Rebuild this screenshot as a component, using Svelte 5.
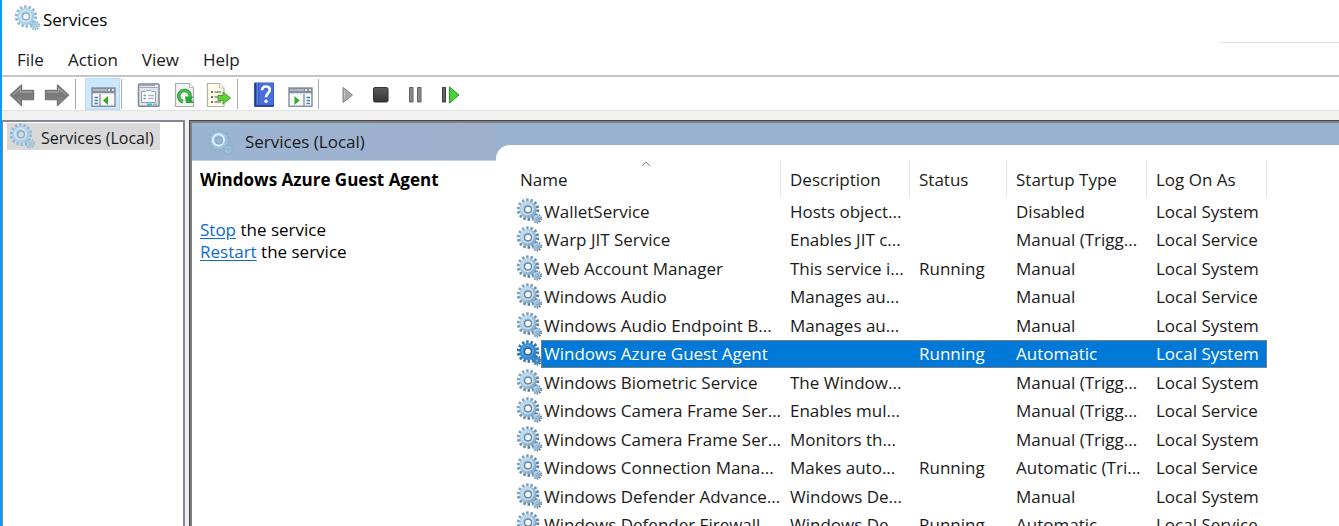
<script>
  const menus = ['File', 'Action', 'View', 'Help'];
  const toolbar = [
    ['back', 'forward'],
    ['tree'],
    ['properties', 'refresh', 'export'],
    ['help', 'actions'],
    ['start', 'stop', 'pause', 'restart']
  ];
  const labels = {
    back: 'Back', forward: 'Forward', tree: 'Show/Hide Console Tree',
    properties: 'Properties', refresh: 'Refresh', export: 'Export List',
    help: 'Help', actions: 'Show/Hide Action Pane', start: 'Start Service',
    stop: 'Stop Service', pause: 'Pause Service', restart: 'Restart Service'
  };
  const columns = ['Name', 'Description', 'Status', 'Startup Type', 'Log On As'];
  const services = [
    ['WalletService', 'Hosts object...', '', 'Disabled', 'Local System'],
    ['Warp JIT Service', 'Enables JIT c...', '', 'Manual (Trigg...', 'Local Service'],
    ['Web Account Manager', 'This service i...', 'Running', 'Manual', 'Local System'],
    ['Windows Audio', 'Manages au...', '', 'Manual', 'Local Service'],
    ['Windows Audio Endpoint B...', 'Manages au...', '', 'Manual', 'Local System'],
    ['Windows Azure Guest Agent', '', 'Running', 'Automatic', 'Local System'],
    ['Windows Biometric Service', 'The Window...', '', 'Manual (Trigg...', 'Local System'],
    ['Windows Camera Frame Ser...', 'Enables mul...', '', 'Manual (Trigg...', 'Local Service'],
    ['Windows Camera Frame Ser...', 'Monitors th...', '', 'Manual (Trigg...', 'Local System'],
    ['Windows Connection Mana...', 'Makes auto...', 'Running', 'Automatic (Tri...', 'Local Service'],
    ['Windows Defender Advance...', 'Windows De...', '', 'Manual', 'Local System'],
    ['Windows Defender Firewall', 'Windows De...', 'Running', 'Automatic', 'Local Service']
  ];
  let selected = $state(5);
</script>

{#snippet gear(kind)}
  <svg class="gear {kind}" viewBox="0 0 26 26" aria-hidden="true">
    <circle class="teeth" cx="12" cy="11.5" r="9.6" stroke-width="3.2" stroke-dasharray="2.5 1.81" />
    <circle class="rim" cx="12" cy="11.5" r="6" stroke-width="5.2" />
    <circle class="shine" cx="11.4" cy="10.8" r="5.6" stroke-width="2" />
    <circle class="edge" cx="12" cy="11.5" r="3.4" stroke-width="1.3" />
    <circle class="teeth" cx="21" cy="20.5" r="4" stroke-width="2" stroke-dasharray="1.5 1.013" />
    <circle class="rim" cx="21" cy="20.5" r="2.3" stroke-width="2.2" />
    <circle class="edge" cx="21" cy="20.5" r="1" stroke-width=".8" />
  </svg>
{/snippet}

{#snippet icon(name)}
  <svg class="tool" viewBox="0 0 26 26" aria-hidden="true">
    {#if name === 'back' || name === 'forward'}
      <g transform={name === 'forward' ? 'translate(26 0) scale(-1 1)' : ''}>
        <path d="M1.5 14 12.5 4v5.5h12v9h-12v6z" fill="url(#metal)" stroke="#777" stroke-width="1.4" stroke-linejoin="round" />
        <path d="M4 14 11.3 7.3V11h12" fill="none" stroke="#aaa" />
      </g>
    {:else if name === 'tree' || name === 'actions'}
      <rect x="2" y="7" width="23" height="18.3" fill="#f7f8fa" stroke="#858b97" stroke-width="1.4" />
      <path d="M2 7h23v6H2z" fill="#878e9b" />
      <path d="M3 9h14M3 12.5h21" stroke="#d9dde3" />
      <path d="M18 9h2m2 0h2" stroke="#fff" stroke-width="1.5" />
      {#if name === 'tree'}
        <path d="M10 13v12" stroke="#858b97" stroke-width="1.3" />
        <path d="M4.5 16.5H8m-3.5 3H8m-3.5 3H8" stroke="#3f7fc4" stroke-width="1.5" />
        <path d="m13 19.5 5-4.5v9z" fill="#2eae20" />
      {:else}
        <path d="M17 13v12" stroke="#858b97" stroke-width="1.3" />
        <path d="M19.5 16.5H23m-3.5 3H23m-3.5 3H23" stroke="#3f7fc4" stroke-width="1.5" />
        <path d="m12.5 19.5-5-4.5v9z" fill="#2eae20" />
      {/if}
    {:else if name === 'properties'}
      <rect x="2.5" y="3" width="20.5" height="22.3" rx="1" fill="#e1e5ea" stroke="#7f8895" stroke-width="1.5" />
      <path d="M3 4.5h20M3 6.5h20" stroke="#a3aab4" />
      <path d="M19 5h3" stroke="#eef5ff" stroke-width="2" />
      <path d="M5.500 10.500h4l1-1h4l1 1h4v11h-14z" fill="#fff" stroke="#8ca0ba" />
      <path d="M7.500 14.500H10m-2.500 3H10" stroke="#7793b5" stroke-width="1.4" />
      <path d="M12 14.500h6m-6 3h6" stroke="#aab5c5" stroke-width="1.4" />
      <path d="M11 23.500h5" stroke="#29bde9" stroke-width="2" /><path d="M17 23.500h4" stroke="#a8b2be" stroke-width="2" />
    {:else if name === 'refresh'}
      <path d="M4.500 2.500h14l4 4v19h-18z" fill="#f3f3f4" stroke="#a9adb3" stroke-width="1.2" />
      <path d="M18.500 2.500v4h4" fill="#fff" stroke="#b9bdc3" />
      <path d="M12 20.700A5.700 5.700 0 1 1 19.100 16" fill="none" stroke="#249d2b" stroke-width="3.6" />
      <path d="M12 20.500A5.700 5.700 0 1 1 19.100 16" fill="none" stroke="#4dc052" stroke-width="1.7" />
      <path d="M14 15.500h8.500l-2 2.500 2 4h-7.500z" fill="#2aa536" />
    {:else if name === 'export'}
      <path d="M1.500 2.500h12l4.500 4.500v18.500H1.500z" fill="#fffce9" stroke="#b4b09c" stroke-width="1.2" />
      <path d="M13.500 2.500V7H18" fill="#fff" stroke="#c2bead" />
      <path d="M5 11h2m-2 5h2m-2 5h2" stroke="#444" stroke-width="1.7" />
      <path d="M8.500 11H15m-6.500 5H13m-4.500 5H15" stroke="#8b8475" stroke-width="1.5" />
      <path d="M12 14.500h5v-3.500l7.500 6-7.500 6v-3.500h-5z" fill="#67cf3a" stroke="#3fa62e" />
    {:else if name === 'help'}
      <path d="M2.500 1.500h19.500v24H2.500z" fill="#2850b4" />
      <path d="M6.500 2h15v22h-15z" fill="#476edb" />
      <path d="M3 2v23h18.500" fill="none" stroke="#183a8d" stroke-width="1.5" />
      <path d="M5.200 2v22" stroke="#7597e5" />
      <path d="M10 9.200q.2-3.700 4-3.700t3.800 3.300c0 3.400-3.800 3.600-3.800 7.500" fill="none" stroke="#fff" stroke-width="2.6" />
      <circle cx="14" cy="20.300" r="1.700" fill="#fff" />
    {:else if name === 'start'}
      <path d="M10 6.500v15L19.500 14z" fill="#aaa" stroke="#858585" stroke-linejoin="round" />
      <path d="M11.500 9v9" stroke="#c9c9c9" />
    {:else if name === 'stop'}
      <rect x="5.500" y="6.500" width="14.500" height="14.500" rx="1.500" fill="url(#coal)" stroke="#333" />
    {:else if name === 'pause'}
      <path d="M6.500 6.500h3.500v14.500h-3.500zM14.500 6.500h3.500v14.500h-3.500z" fill="#8b8b8b" stroke="#626262" />
    {:else}
      <path d="M4.500 6.500h3v14.500h-3z" fill="#666" stroke="#393939" />
      <path d="M11.500 6v16l9.500-8z" fill="#47d43b" stroke="#269820" stroke-linejoin="round" />
    {/if}
  </svg>
{/snippet}

<div class="window">
  <svg class="defs" aria-hidden="true">
    <linearGradient id="metal" x2="0" y2="1"><stop stop-color="#929292" /><stop offset=".5" stop-color="#777" /><stop offset="1" stop-color="#969696" /></linearGradient>
    <linearGradient id="coal" x2="0" y2="1"><stop stop-color="#5b5b5b" /><stop offset="1" stop-color="#363636" /></linearGradient>
    <linearGradient id="steel" x2="1" y2="1"><stop stop-color="#86abc9" /><stop offset=".5" stop-color="#6f93b0" /><stop offset="1" stop-color="#4c6b86" /></linearGradient>
    <linearGradient id="rim" x2="1" y2="1"><stop stop-color="#b5d6ee" /><stop offset="1" stop-color="#7fa9cb" /></linearGradient>
  </svg>
  <header class="title">{@render gear('pale')}<span>Services</span></header>
  <nav class="menu">
    {#each menus as m}<button>{m}</button>{/each}
  </nav>
  <div class="toolbar">
    {#each toolbar as group}
      <div class="group">
        {#each group as name}
          <button class:active={name === 'tree'} aria-label={labels[name]}>{@render icon(name)}</button>
        {/each}
      </div>
    {/each}
  </div>

  <main>
    <aside class="tree">
      <button class="node">{@render gear('pale')}<span>Services (Local)</span></button>
    </aside>
    <section class="panel">
      <div class="detail">
        <div class="banner">{@render gear('faint')}<span>Services (Local)</span></div>
        <div class="info">
          <h1>Windows Azure Guest Agent</h1>
          <p><a href="#stop">Stop</a> the service</p>
          <p><a href="#restart">Restart</a> the service</p>
        </div>
      </div>
      <div class="list">
        <table>
          <colgroup><col class="c1" /><col class="c2" /><col class="c3" /><col class="c4" /><col class="c5" /></colgroup>
          <thead>
            <tr>
              {#each columns as c, i}
                <th>{c}{#if i === 0}<svg class="sort" viewBox="0 0 10 6" aria-hidden="true"><path d="m1 5 4-4 4 4" fill="none" stroke="#888" /></svg>{/if}</th>
              {/each}
            </tr>
          </thead>
          <tbody>
            {#each services as row, i}
              <tr class:selected={i === selected} onclick={() => (selected = i)}>
                <td class="name"><div>{@render gear(i === selected ? 'strong' : 'normal')}<span>{row[0]}</span></div></td>
                {#each row.slice(1) as cell}<td>{cell}</td>{/each}
              </tr>
            {/each}
          </tbody>
        </table>
      </div>
    </section>
  </main>
</div>

<style>
  :global(body) { margin: 0; overflow: hidden; }
  .window {
    box-sizing: border-box;
    height: 100vh;
    display: flex;
    flex-direction: column;
    border-left: 2px solid #0c9bf3;
    background: #fff;
    color: #1a1a1a;
    font-family: "Open Sans", "Noto Sans", sans-serif;
    font-size: 17px;
    line-height: 22px;
    white-space: nowrap;
  }
  .defs { position: absolute; width: 0; height: 0; }
  button { font: inherit; color: inherit; background: none; border: 0; padding: 0; margin: 0; }
  .gear { width: 26px; height: 26px; flex: none; fill: none; }
  .gear .teeth { stroke: url(#steel); }
  .gear .rim { stroke: url(#rim); }
  .gear .shine { stroke: #c2dcf0; }
  .gear .edge { stroke: #64839f; }
  .pale .teeth { stroke: #92b8d3; }
  .pale .rim { stroke: #a9cfe7; }
  .pale .shine { stroke: #cbe5f4; }
  .pale .edge { stroke: #8baac0; }
  .faint .teeth { stroke: #8eafc9; }
  .faint .rim { stroke: #9dc3dd; }
  .faint .shine { stroke: #dceffa; }
  .faint .edge { stroke: #86a9c8; }
  .strong .teeth { stroke: #2c74b4; }
  .strong .rim { stroke: #3585cf; }
  .strong .shine { stroke: #4f9fdf; }
  .strong .edge { stroke: #235f98; }

  .title { display: flex; align-items: center; gap: 3px; height: 40px; padding-left: 12px; color: #000; }
  .title .gear { margin-bottom: 4px; }
  .menu { position: relative; box-sizing: border-box; display: flex; gap: 24px; height: 37px; padding: 4px 15px 0; align-items: center; border-bottom: 2px solid #c4c4c8; }
  .menu::after { content: ""; position: absolute; top: 2px; right: 0; width: 120px; height: 1px; background: #e6e6e6; }
  .toolbar { display: flex; height: 33px; padding-left: 2px; border-bottom: 1px solid #e1e1e1; }
  .group { display: flex; align-items: center; }
  .group + .group::before { content: ""; width: 1px; height: 30px; margin: 0 9px 0 1px; background: #aaa; }
  .toolbar button { display: flex; align-items: center; justify-content: center; width: 35px; height: 32px; }
  .toolbar .active { background: #cce8ff; box-shadow: inset 0 0 0 1px #b4dcfa; }
  .tool { width: 26px; height: 26px; }

  main { flex: 1; min-height: 0; display: flex; gap: 4px; padding-top: 9px; background: #f0f0f0; }
  .tree { box-sizing: border-box; width: 183px; border: solid #828790; border-width: 2px 2px 0 1px; background: #fff; padding: 1px 4px; }
  .node { display: flex; align-items: center; gap: 6px; height: 27px; padding: 2px 6px 0 2px; box-sizing: border-box; font-size: 16px; background: #d9d9d9; }
  .node .gear { margin-bottom: 3px; }
  .panel { flex: 1; min-width: 0; display: flex; border: solid #808080; border-width: 2px 0 0 2px; outline: 1px solid #484848; margin: 1px 0 0 1px; background: #99b2cf; overflow: hidden; }
  .detail { width: 304px; flex: none; display: flex; flex-direction: column; }
  .banner { display: flex; align-items: center; gap: 12px; height: 38px; padding: 1px 0 0 15px; background: linear-gradient(90deg, #9bb5d3, #9eafcb); border-bottom: 1px solid #c3d3e4; box-sizing: border-box; }
  .info { flex: 1; background: #fff; padding: 8px 8px; color: #000; }
  h1 { font-size: 17px; line-height: 22px; font-weight: 700; margin: 0 0 28px; }
  p { margin: 0; }
  a { color: #0a6cd6; text-decoration: underline; text-underline-offset: 2px; }
  .list { flex: 1; min-width: 0; margin-top: 22px; padding: 15px 0 0 14px; background: #fff; border-top-left-radius: 14px; overflow: hidden; }
  table { table-layout: fixed; width: 757px; border-collapse: separate; border-spacing: 0; }
  .c1 { width: 271px; } .c2 { width: 129px; } .c3 { width: 97px; } .c4 { width: 140px; } .c5 { width: 120px; }
  th { position: relative; box-sizing: border-box; height: 37px; padding: 2px 0 0 9px; text-align: left; font-weight: 400; border-right: 1px solid #e5e5e5; }
  th:first-child { padding-left: 10px; }
  .sort { position: absolute; top: 1px; left: 131px; width: 10px; height: 6px; }
  td { box-sizing: border-box; height: 28px; padding: 0 0 0 9px; line-height: 22px; border: solid transparent; border-width: 1px 0; }
  tr:nth-child(odd) td { height: 29px; }
  td.name { padding: 0 0 0 6px; border: 0; }
  .name div { display: flex; align-items: stretch; height: 28px; }
  .name .gear { margin-right: -1px; }
  .name span { flex: 1; line-height: 26px; padding-left: 2px; border: solid transparent; border-width: 1px 0 1px 1px; }
  .selected td, .selected span { color: #fff; background: #0078d7; border-color: #7a7f86; }
  .selected td.name { background: none; }
  .selected td:last-child { border-right: 1px solid #7a7f86; }
</style>
